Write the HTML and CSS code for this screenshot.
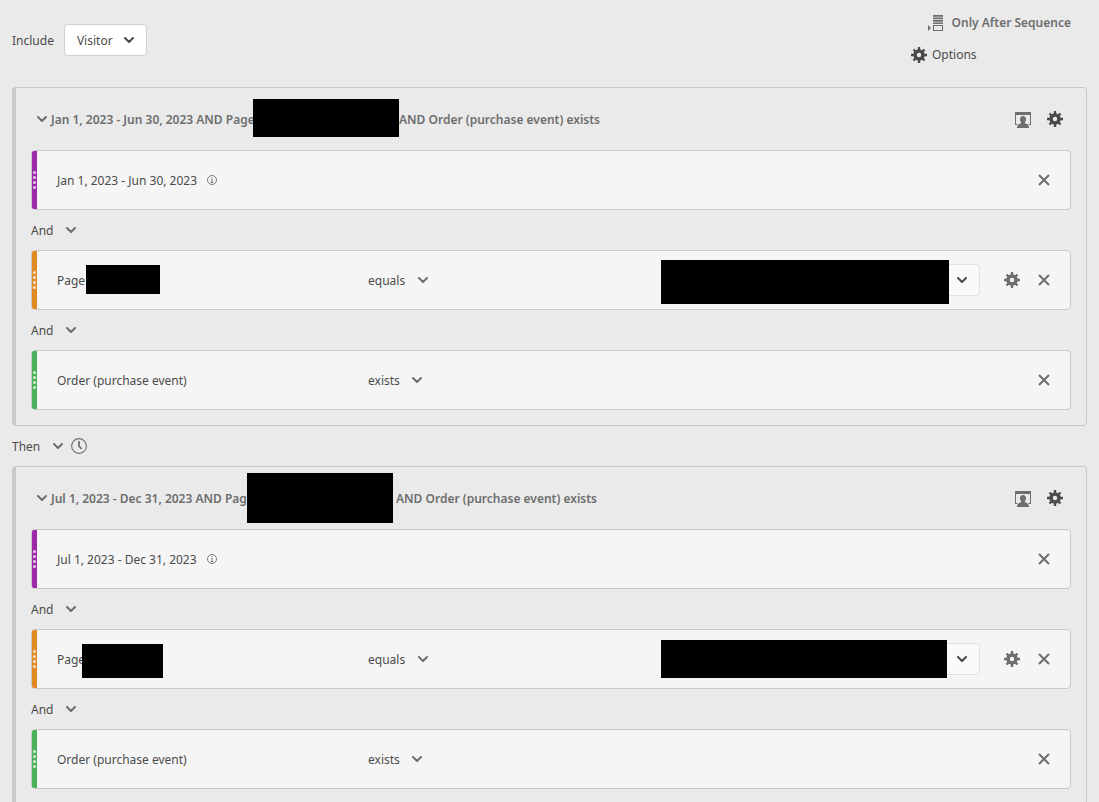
FILE: index.html
```html
<!DOCTYPE html>
<html lang="en">
<head>
<meta charset="utf-8">
<meta name="viewport" content="width=device-width, initial-scale=1">
<title>Segment builder</title>
<link rel="stylesheet" href="styles.css">
</head>
<body>
<svg class="sprite" aria-hidden="true">
  <symbol id="chevron" viewBox="0 0 10 6"><path d="M1 1l4 4 4-4" fill="none" stroke="currentColor" stroke-width="2" stroke-linecap="round" stroke-linejoin="round"/></symbol>
  <symbol id="gear" viewBox="0 0 16 16"><circle cx="8" cy="8" r="4" fill="none" stroke="currentColor" stroke-width="3.6"/><path d="M8 0v3M8 13v3M0 8h3M13 8h3M2.500 2.500l2 2M11.500 11.500l2 2M13.500 2.500l-2 2M4.500 11.500l-2 2" stroke="currentColor" stroke-width="2.400"/></symbol>
  <symbol id="cross" viewBox="0 0 12 12"><path d="M1 1l10 10M11 1L1 11" stroke="currentColor" stroke-width="2" fill="none"/></symbol>
  <symbol id="info" viewBox="0 0 10 10"><circle cx="5" cy="5" r="4.5" fill="none" stroke="currentColor" stroke-width=".9"/><path d="M4 4.4h1v3M3.8 7.5h2.4M4.5 2.6h1" fill="none" stroke="currentColor" stroke-width=".9"/></symbol>
  <symbol id="clock" viewBox="0 0 16 16"><circle cx="8" cy="8" r="7.4" fill="none" stroke="currentColor" stroke-width="1.1"/><path d="M8 3v5l2.600 3" fill="none" stroke="currentColor" stroke-width="1.800"/></symbol>
  <symbol id="person" viewBox="0 0 16 17"><path d="M0 1h16v13h-2.500v-1H15V4H1v9h1.500v1H0z" fill="currentColor"/><path d="M8 5c2 0 3 1.300 3 3.300 0 1.300-.5 2.200-1.100 2.900v1c2.400.5 4 1.600 4.200 4.800H1.900c.2-3.200 1.800-4.300 4.200-4.800v-1C5.500 10.500 5 9.600 5 8.300 5 6.300 6 5 8 5z" fill="currentColor"/></symbol>
  <symbol id="sequence" viewBox="0 0 16 16"><path d="M5 0h10v1.700H5zM5 2.600h10v1.700H5zM5 5.100h10v1.700H5zM5 7.500h10v1.500H5zM0 10l3 3-3 3z" fill="currentColor"/><path d="M5.500 10.500h9v5h-9z" fill="none" stroke="currentColor" stroke-width="1.100"/></symbol>
</svg>

<main class="builder">
  <header class="toolbar">
    <div class="include">
      <label for="scope">Include</label>
      <span class="picker picker-box"><select id="scope"><option>Visitor</option></select><svg class="chevron"><use href="#chevron"/></svg></span>
    </div>
    <div class="tools">
      <button class="tool tool-sequence"><svg class="icon"><use href="#sequence"/></svg>Only After Sequence</button>
      <button class="tool tool-options"><svg class="icon"><use href="#gear"/></svg>Options</button>
    </div>
  </header>

  <section class="container">
    <header class="container-head">
      <button class="fold" aria-label="Collapse"><svg class="chevron"><use href="#chevron"/></svg></button>
      <h2 class="title"><span class="text title-start-long">Jan 1, 2023 - Jun 30, 2023 AND Page</span><span class="mask mask-title"></span><span class="text">AND Order (purchase event) exists</span></h2>
      <div class="actions">
        <button class="action" aria-label="Container scope"><svg class="icon icon-person"><use href="#person"/></svg></button>
        <button class="action dark" aria-label="Container options"><svg class="icon"><use href="#gear"/></svg></button>
      </div>
    </header>
    <article class="rule date">
      <span class="grip"><i></i><i></i><i></i><i></i></span>
      <span class="name"><span class="text">Jan 1, 2023 - Jun 30, 2023</span><svg class="info"><use href="#info"/></svg></span>
      <div class="actions"><button class="action" aria-label="Remove"><svg class="cross"><use href="#cross"/></svg></button></div>
    </article>
    <div class="join"><span class="picker"><select aria-label="Join"><option>And</option></select><svg class="chevron"><use href="#chevron"/></svg></span></div>
    <article class="rule dimension">
      <span class="grip"><i></i><i></i><i></i><i></i></span>
      <span class="name name-masked"><span class="text name-start">PageN</span><span class="mask mask-name"></span></span>
      <span class="picker"><select aria-label="Operator"><option>equals</option></select><svg class="chevron"><use href="#chevron"/></svg></span>
      <div class="value"><span class="mask-value"></span><button class="value-open" aria-label="Show values"><svg class="chevron"><use href="#chevron"/></svg></button></div>
      <div class="actions">
        <button class="action" aria-label="Rule options"><svg class="icon"><use href="#gear"/></svg></button>
        <button class="action" aria-label="Remove"><svg class="cross"><use href="#cross"/></svg></button>
      </div>
    </article>
    <div class="join"><span class="picker"><select aria-label="Join"><option>And</option></select><svg class="chevron"><use href="#chevron"/></svg></span></div>
    <article class="rule metric">
      <span class="grip"><i></i><i></i><i></i><i></i></span>
      <span class="name"><span class="text">Order (purchase event)</span></span>
      <span class="picker"><select aria-label="Operator"><option>exists</option></select><svg class="chevron"><use href="#chevron"/></svg></span>
      <div class="actions"><button class="action" aria-label="Remove"><svg class="cross"><use href="#cross"/></svg></button></div>
    </article>
  </section>

  <div class="join"><span class="picker"><select aria-label="Sequence join"><option>Then</option></select><svg class="chevron"><use href="#chevron"/></svg></span><button class="clock" aria-label="Time constraint"><svg class="icon"><use href="#clock"/></svg></button></div>

  <section class="container">
    <header class="container-head">
      <button class="fold" aria-label="Collapse"><svg class="chevron"><use href="#chevron"/></svg></button>
      <h2 class="title"><span class="text title-start-short">Jul 1, 2023 - Dec 31, 2023 AND Page</span><span class="mask mask-title mask-title-tall"></span><span class="text">AND Order (purchase event) exists</span></h2>
      <div class="actions">
        <button class="action" aria-label="Container scope"><svg class="icon icon-person"><use href="#person"/></svg></button>
        <button class="action dark" aria-label="Container options"><svg class="icon"><use href="#gear"/></svg></button>
      </div>
    </header>
    <article class="rule date">
      <span class="grip"><i></i><i></i><i></i><i></i></span>
      <span class="name"><span class="text">Jul 1, 2023 - Dec 31, 2023</span><svg class="info"><use href="#info"/></svg></span>
      <div class="actions"><button class="action" aria-label="Remove"><svg class="cross"><use href="#cross"/></svg></button></div>
    </article>
    <div class="join"><span class="picker"><select aria-label="Join"><option>And</option></select><svg class="chevron"><use href="#chevron"/></svg></span></div>
    <article class="rule dimension">
      <span class="grip"><i></i><i></i><i></i><i></i></span>
      <span class="name name-masked"><span class="text name-start-short">Page</span><span class="mask mask-name mask-name-tall"></span></span>
      <span class="picker"><select aria-label="Operator"><option>equals</option></select><svg class="chevron"><use href="#chevron"/></svg></span>
      <div class="value"><span class="mask-value mask-value-low"></span><button class="value-open" aria-label="Show values"><svg class="chevron"><use href="#chevron"/></svg></button></div>
      <div class="actions">
        <button class="action" aria-label="Rule options"><svg class="icon"><use href="#gear"/></svg></button>
        <button class="action" aria-label="Remove"><svg class="cross"><use href="#cross"/></svg></button>
      </div>
    </article>
    <div class="join"><span class="picker"><select aria-label="Join"><option>And</option></select><svg class="chevron"><use href="#chevron"/></svg></span></div>
    <article class="rule metric">
      <span class="grip"><i></i><i></i><i></i><i></i></span>
      <span class="name"><span class="text">Order (purchase event)</span></span>
      <span class="picker"><select aria-label="Operator"><option>exists</option></select><svg class="chevron"><use href="#chevron"/></svg></span>
      <div class="actions"><button class="action" aria-label="Remove"><svg class="cross"><use href="#cross"/></svg></button></div>
    </article>
  </section>
</main>
</body>
</html>
```

FILE: styles.css
```css
* { box-sizing: border-box; }

body {
  margin: 0;
  background: #eaeaea;
  color: #4b4b4b;
  font: 12px/20px "Noto Sans", "Open Sans", sans-serif;
}

button, select {
  margin: 0;
  padding: 0;
  border: 0;
  background: none;
  color: inherit;
  font: inherit;
}

svg { display: block; flex: none; }
.sprite { position: absolute; width: 0; height: 0; }
.icon { width: 16px; height: 16px; }
.icon-person { height: 17px; }
.cross { width: 12px; height: 12px; }
.chevron { width: 10px; height: 6px; color: #6e6e6e; }
.info { width: 10px; height: 10px; color: #6e6e6e; }

/* Optical centring of labels next to icons */
.text, .include label { padding-top: 2px; }

.builder {
  height: 100vh;
  overflow: hidden;
  padding: 0 12px;
}

/* Toolbar */
.toolbar {
  display: flex;
  justify-content: space-between;
  height: 87px;
  padding: 7px 16px 0 0;
}
.include {
  display: flex;
  align-items: center;
  gap: 10px;
  height: 66px;
}
.tools {
  display: flex;
  flex-direction: column;
  min-width: 160px;
}
.tool {
  display: flex;
  align-items: center;
  height: 32px;
}
.tool-sequence {
  align-self: flex-end;
  gap: 8px;
  color: #6e6e6e;
  font-weight: 600;
}
.tool-options { gap: 5px; }

/* Drop-downs */
.picker {
  display: inline-grid;
  align-items: center;
  justify-self: start;
}
.picker select, .picker svg { grid-area: 1 / 1; }
.picker select {
  appearance: none;
  height: 32px;
  padding: 2px 22px 0 0;
}
.picker svg {
  justify-self: end;
  pointer-events: none;
}
.picker-box select {
  padding: 2px 33px 0 12px;
  border: 1px solid #d0d0d0;
  border-radius: 4px;
  background: #fff;
}
.picker-box svg {
  margin-right: 13px;
  color: #4b4b4b;
}

/* Containers */
.container {
  padding: 0 15px 15px;
  border: 1px solid #c9c9c9;
  border-left-width: 4px;
  border-radius: 4px;
}
.container-head {
  display: flex;
  align-items: center;
  height: 62px;
}
.fold { padding: 4px 4px 4px 6px; }
.title {
  display: flex;
  align-items: center;
  flex: 1;
  margin: 0;
  color: #6e6e6e;
  font-size: 12px;
  font-weight: 600;
  white-space: nowrap;
}
.title-start-long { width: 202px; }
.title-start-short { width: 196px; }

/* Redaction bars, painted over the text they follow */
.mask {
  position: relative;
  flex: none;
  background: #000;
}
.mask-title { width: 146px; height: 38px; margin-bottom: 2px; }
.mask-title-tall { height: 50px; margin: 0 3px 0 0; }
.mask-name { width: 74px; height: 29px; margin-bottom: 2px; }
.mask-name-tall { width: 81px; height: 34px; margin: 4px 0 0; }

/* Rules */
.rule {
  position: relative;
  display: grid;
  grid-template-columns: 311fr 293fr 319fr 80px;
  align-items: center;
  height: 60px;
  padding: 0 10px 0 25px;
  border: 1px solid #c9c9c9;
  border-radius: 4px;
  background: #f5f5f5;
}
.name {
  display: flex;
  align-items: center;
  gap: 10px;
  white-space: nowrap;
}
.name-masked { gap: 0; }
.name-start { width: 29px; }
.name-start-short { width: 25px; }

.grip {
  position: absolute;
  inset: 0 auto 0 0;
  display: flex;
  flex-direction: column;
  align-items: center;
  justify-content: center;
  gap: 2px;
  width: 5px;
  border-radius: 2px 0 0 2px;
}
.grip i {
  width: 3px;
  height: 3px;
  border-radius: 50%;
  background: #fff;
  opacity: .75;
}
.date .grip { background: #9d2aab; }
.dimension .grip { background: #e38b22; }
.metric .grip { background: #4bb25b; }

.actions {
  grid-column: 4;
  display: flex;
  justify-content: flex-end;
  color: #6e6e6e;
}
.action {
  display: grid;
  place-items: center;
  width: 32px;
  height: 32px;
}
.dark { color: #4b4b4b; }

.value {
  position: relative;
  display: flex;
  justify-content: flex-end;
  height: 32px;
  border: 1px solid #e1e1e1;
  border-radius: 4px;
  background: #fafafa;
}
.mask-value {
  position: absolute;
  inset: -5px 30px -9px -1px;
  background: #000;
}
.mask-value-low { inset: -4px 32px -4px -1px; }
.value-open {
  display: grid;
  place-items: center;
  width: 34px;
}
.value-open .chevron { color: #4b4b4b; }

/* Joins */
.join {
  display: flex;
  align-items: center;
  gap: 8px;
  height: 40px;
}
.clock { color: #6e6e6e; }
```
